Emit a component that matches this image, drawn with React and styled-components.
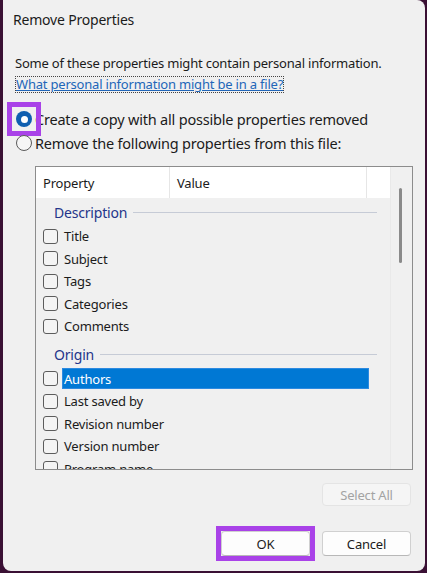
import React from 'react';
import styled, { createGlobalStyle } from 'styled-components';

const GlobalStyle = createGlobalStyle`
	html, body {
		margin: 0;
		padding: 0;
		background: #3a1034;
	}
	body {
		width: 427px;
		height: 573px;
		overflow: hidden;
		font-family: 'Noto Sans', 'Open Sans', sans-serif;
		font-size: 13px;
		letter-spacing: -0.2px;
		color: #1b1b1b;
	}
`;

const ACCENT = '#a942e8';

const Dialog = styled.div`
	margin-left: 3px;
	width: 422px;
	height: 571px;
	background: #f0f0f0;
	border-radius: 0 8px 8px 8px;
	display: flex;
	flex-direction: column;
	overflow: hidden;
`;

const TitleBar = styled.div`
	height: 38px;
	display: flex;
	align-items: center;
	padding-left: 10px;
	font-size: 14px;
`;

const Intro = styled.p`
	margin: 17px 0 0 12px;
	line-height: 17px;
`;

const HelpLink = styled.a`
	align-self: flex-start;
	margin: 4px 0 0 12px;
	line-height: 15px;
	border: 1px dotted #444;
	color: #2266b8;
	text-decoration: underline;
	cursor: pointer;
`;

const RadioGroup = styled.div`
	margin-top: 14px;
	display: flex;
	flex-direction: column;
`;

const RadioRow = styled.label`
	height: 24px;
	display: flex;
	align-items: center;
	font-size: 14.5px;
`;

const RadioWrap = styled.span`
	width: 22px;
	height: 22px;
	margin-left: 10px;
	display: flex;
	align-items: center;
	justify-content: center;
	outline: ${(p) => (p.$highlight ? `5px solid ${ACCENT}` : 'none')};
	outline-offset: 1px;
	position: relative;
	z-index: 1;
`;

const RadioDot = styled.span`
	width: 16px;
	height: 16px;
	box-sizing: border-box;
	border-radius: 50%;
	background: ${(p) => (p.$checked ? '#0f5fb0' : '#f6f6f6')};
	border: ${(p) => (p.$checked ? 'none' : '1px solid #5a5a5a')};
	display: flex;
	align-items: center;
	justify-content: center;

	&::after {
		content: '';
		display: ${(p) => (p.$checked ? 'block' : 'none')};
		width: 7px;
		height: 7px;
		border-radius: 50%;
		background: #fff;
	}
`;

const ListBox = styled.div`
	margin: 11px 0 0 32px;
	width: 378px;
	height: 304px;
	box-sizing: border-box;
	border: 1px solid #8c8c8c;
	display: grid;
	grid-template-columns: 1fr 22px;
`;

const ListMain = styled.div`
	display: flex;
	flex-direction: column;
	overflow: hidden;
`;

const Header = styled.div`
	height: 31px;
	flex-shrink: 0;
	background: #fff;
	display: grid;
	grid-template-columns: 134px 197px 1fr;
`;

const HeaderCell = styled.div`
	display: flex;
	align-items: center;
	padding-left: ${(p) => p.$pad}px;
	border-right: ${(p) => (p.$last ? 'none' : '1px solid #e6e6e6')};
`;

const Rows = styled.div`
	flex: 1;
	overflow: hidden;
	padding-top: 1px;
`;

const GroupHeader = styled.div`
	height: 26px;
	margin-top: ${(p) => p.$gap || 0}px;
	display: flex;
	align-items: center;
	padding-left: 18px;
	color: #24358a;
	font-size: 14px;

	&::after {
		content: '';
		flex: 1;
		height: 1px;
		background: #c6cbd6;
		margin: 0 13px 0 6px;
	}
`;

const Row = styled.div`
	height: 22.5px;
	display: flex;
	align-items: center;
`;

const CheckBox = styled.span`
	width: 15px;
	height: 15px;
	box-sizing: border-box;
	margin-left: 7px;
	border: 1px solid #5c5c5c;
	border-radius: 3px;
	background: #f4f4f4;
	flex-shrink: 0;
`;

const RowLabel = styled.span`
	flex: 1;
	margin: 0 21px 0 4px;
	height: 21px;
	padding-left: 2px;
	display: flex;
	align-items: center;
	background: ${(p) => (p.$selected ? '#0078d4' : 'transparent')};
	color: ${(p) => (p.$selected ? '#fff' : 'inherit')};
	box-shadow: ${(p) => (p.$selected ? 'inset 0 0 0 1px #2d8ae0' : 'none')};
`;

const ScrollTrack = styled.div`
	border-left: 1px solid #e9e9e9;
`;

const ScrollThumb = styled.div`
	margin: 21px 0 0 8px;
	width: 3px;
	height: 75px;
	border-radius: 2px;
	background: #8a8a8a;
`;

const ButtonRow = styled.div`
	display: flex;
	justify-content: flex-end;
	gap: 12px;
	padding-right: 14px;
	margin-top: ${(p) => p.$top}px;
`;

const Highlight = styled.span`
	display: flex;
	outline: 5px solid ${ACCENT};
`;

const Button = styled.button`
	width: 89px;
	height: ${(p) => p.$h || 25}px;
	box-sizing: border-box;
	border-radius: 4px;
	font-family: inherit;
	font-size: 13px;
	letter-spacing: -0.2px;
	padding: 0;
	background: ${(p) => (p.disabled ? '#f5f5f5' : '#fdfdfd')};
	color: ${(p) => (p.disabled ? '#a3a3a3' : '#1b1b1b')};
	border: 1px solid ${(p) => (p.disabled ? '#e4e4e4' : '#d0d0d0')};
	border-bottom-color: ${(p) => (p.disabled ? '#e4e4e4' : '#b8b8b8')};
`;

const groups = [
	{
		name: 'Description',
		items: ['Title', 'Subject', 'Tags', 'Categories', 'Comments'],
	},
	{
		name: 'Origin',
		items: [
			'Authors',
			'Last saved by',
			'Revision number',
			'Version number',
			'Program name',
		],
	},
];

export default function App() {
	return (
		<>
			<GlobalStyle />
			<Dialog>
				<TitleBar>Remove Properties</TitleBar>
				<Intro>Some of these properties might contain personal information.</Intro>
				<HelpLink>What personal information might be in a file?</HelpLink>
				<RadioGroup>
					<RadioRow>
						<RadioWrap $highlight>
							<RadioDot $checked />
						</RadioWrap>
						<span>Create a copy with all possible properties removed</span>
					</RadioRow>
					<RadioRow>
						<RadioWrap>
							<RadioDot />
						</RadioWrap>
						<span>Remove the following properties from this file:</span>
					</RadioRow>
				</RadioGroup>
				<ListBox>
					<ListMain>
						<Header>
							<HeaderCell $pad={7}>Property</HeaderCell>
							<HeaderCell $pad={7}>Value</HeaderCell>
							<HeaderCell $last />
						</Header>
						<Rows>
							{groups.map((group, gi) => (
								<React.Fragment key={group.name}>
									<GroupHeader $gap={gi > 0 ? 4 : 0}>{group.name}</GroupHeader>
									{group.items.map((item) => (
										<Row key={item}>
											<CheckBox />
											<RowLabel $selected={item === 'Authors'}>{item}</RowLabel>
										</Row>
									))}
								</React.Fragment>
							))}
						</Rows>
					</ListMain>
					<ScrollTrack>
						<ScrollThumb />
					</ScrollTrack>
				</ListBox>
				<ButtonRow $top={13}>
					<Button disabled $h={23}>
						Select All
					</Button>
				</ButtonRow>
				<ButtonRow $top={25}>
					<Highlight>
						<Button>OK</Button>
					</Highlight>
					<Button>Cancel</Button>
				</ButtonRow>
			</Dialog>
		</>
	);
}
